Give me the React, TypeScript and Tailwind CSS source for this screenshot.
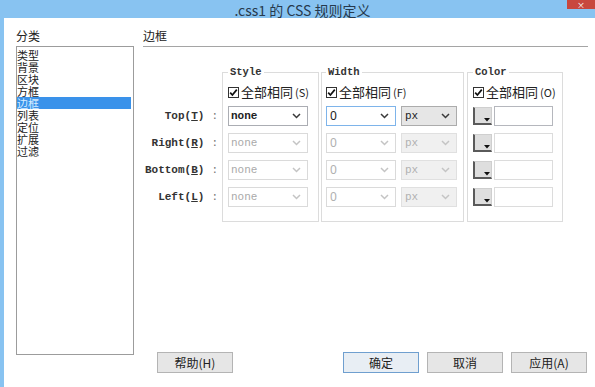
import React from "react";

const cjk = "font-['Noto_Sans_CJK_SC',sans-serif]";
const mono = "font-['Liberation_Mono','Noto_Sans_CJK_SC',monospace]";

const categories = ["类型", "背景", "区块", "方框", "边框", "列表", "定位", "扩展", "过滤"];

const Chevron = ({ light }: { light?: boolean }) => (
  <svg width="9" height="6" viewBox="0 0 9 6" className="shrink-0">
    <polyline points="1,1 4.5,4.5 8,1" fill="none" stroke={light ? "#c4c4c4" : "#3a3a3a"} strokeWidth="1.5" />
  </svg>
);

const Check = () => (
  <div className="w-[11px] h-[11px] border border-[#333] bg-white flex items-center justify-center shrink-0">
    <svg width="9" height="9" viewBox="0 0 9 9">
      <polyline points="1.2,4.6 3.4,7 7.8,1.6" fill="none" stroke="#111" strokeWidth="1.7" />
    </svg>
  </div>
);

const Swatch = () => (
  <div className="w-[19px] h-[18px] border-l-[2px] border-b-[2px] border-t border-r border-l-[#5a5a5a] border-b-[#5a5a5a] border-t-[#cfcfcf] border-r-[#cfcfcf] bg-[#dedede] flex items-end justify-end shrink-0">
    <svg width="6" height="4" viewBox="0 0 6 4" className="mb-[1px] mr-[1px]">
      <polygon points="0,0 6,0 3,3.5" fill="#111" />
    </svg>
  </div>
);

const CheckRow = ({ letter }: { letter: string }) => (
  <div className={`h-[18px] flex items-center gap-[2px] ${cjk}`}>
    <Check />
    <span className="text-[13px] leading-[18px] text-[#222]">全部相同</span>
    <span className="text-[11px] leading-[18px] text-[#222]">({letter})</span>
  </div>
);

const StyleSelect = ({ enabled }: { enabled: boolean }) => (
  <div
    className={
      enabled
        ? "w-[80px] h-[20px] border border-[#abadb3] bg-white flex items-center justify-between pl-[2px] pr-[6px]"
        : "w-[80px] h-[20px] border border-[#dadada] bg-white flex items-center justify-between pl-[2px] pr-[6px]"
    }
  >
    <span className={enabled ? `${mono} text-[11px] font-bold text-[#222]` : `${mono} text-[11px] text-[#aaa]`}>none</span>
    <Chevron light={!enabled} />
  </div>
);

const WidthSelects = ({ enabled }: { enabled: boolean }) => (
  <div className="flex gap-[5px]">
    <div
      className={
        enabled
          ? "w-[70px] h-[20px] border border-[#7eb4ea] bg-white flex items-center justify-between pl-[3px] pr-[6px]"
          : "w-[70px] h-[20px] border border-[#dadada] bg-white flex items-center justify-between pl-[3px] pr-[6px]"
      }
    >
      <span className={enabled ? "font-['Noto_Sans'] text-[12px] text-[#222]" : "font-['Noto_Sans'] text-[12px] text-[#b0b0b0]"}>0</span>
      <Chevron light={!enabled} />
    </div>
    <div
      className={
        enabled
          ? "w-[56px] h-[20px] border border-[#acacac] bg-[#e6e6e6] flex items-center justify-between pl-[3px] pr-[6px]"
          : "w-[56px] h-[20px] border border-[#e0e0e0] bg-[#f0f0f0] flex items-center justify-between pl-[3px] pr-[6px]"
      }
    >
      <span className={enabled ? `${mono} text-[11px] text-[#222]` : `${mono} text-[11px] text-[#b0b0b0]`}>px</span>
      <Chevron light={!enabled} />
    </div>
  </div>
);

const ColorRow = ({ enabled }: { enabled: boolean }) => (
  <div className="flex items-center gap-[2px] h-[20px]">
    <Swatch />
    <div className={enabled ? "w-[59px] h-[20px] border border-[#b5b7bd] bg-white" : "w-[59px] h-[20px] border border-[#dcdcdc] bg-white"} />
  </div>
);

const Legend = ({ text }: { text: string }) => (
  <legend className={`px-[2px] ${mono} text-[10.5px] leading-[12px] font-bold text-[#333]`}>{text}</legend>
);

const rows = [
  { name: "Top", key: "T" },
  { name: "Right", key: "R" },
  { name: "Bottom", key: "B" },
  { name: "Left", key: "L" },
];

const Btn = ({ children, primary }: { children: React.ReactNode; primary?: boolean }) => (
  <button
    className={
      primary
        ? `w-[76px] h-[21px] border border-[#6f9fcf] bg-[#e8eef4] ${cjk} text-[12px] leading-[19px] text-[#222]`
        : `w-[76px] h-[21px] border border-[#b4b4b4] bg-[#e6e6e6] ${cjk} text-[12px] leading-[19px] text-[#222]`
    }
  >
    {children}
  </button>
);

export default function App() {
  return (
    <div className={`w-[595px] h-[387px] bg-white flex flex-col overflow-hidden ${cjk} text-[#222]`}>
      {/* Title bar */}
      <div className="relative h-[18px] shrink-0 bg-[#88c3f1] flex justify-center pl-[10px]">
        <span className="mt-[2px] text-[14px] leading-[16px] text-[#26394d]">.css1 的 CSS 规则定义</span>
        <div className="absolute top-0 right-0 w-[28px] h-[9px] bg-[#c8473e] flex justify-center items-center overflow-hidden">
          <span className="text-white text-[8px] leading-[8px]">×</span>
        </div>
      </div>

      <div className="flex-1 flex border-l-[4px] border-[#88c3f1]">
        {/* Category list */}
        <div className="ml-[12px] w-[118px] pt-[10px] flex flex-col">
          <div className="h-[18px] text-[12px] leading-[16px]">分类</div>
          <div className="h-[309px] border border-[#9c9c9c] pt-[2px] pr-[2px]">
            {categories.map((c) =>
              c === "边框" ? (
                <div key={c} className="h-[12px] text-[11px] leading-[12px] bg-[#3a92ea] text-[#d8ecff]">
                  {c}
                </div>
              ) : (
                <div key={c} className="h-[12px] text-[11px] leading-[12px] text-[#222]">
                  {c}
                </div>
              )
            )}
          </div>
        </div>

        {/* Right panel */}
        <div className="ml-[9px] w-[445px] pt-[10px] flex flex-col">
          <div className="h-[19px] border-b border-[#a5a5a5] text-[12px] leading-[16px]">边框</div>

          <div className="mt-[19px] flex">
            <div className="w-[79px] pt-[40px] flex flex-col gap-[7px]">
              {rows.map((r) => (
                <div key={r.name} className={`h-[20px] flex items-center justify-end pr-[4px] ${mono} text-[11px] font-bold text-[#333]`}>
                  <span>
                    {r.name}(<span className="underline">{r.key}</span>)
                  </span>
                  <span className="ml-[7px] font-normal text-[#777]">:</span>
                </div>
              ))}
            </div>

            <fieldset className="w-[97px] border border-[#dcdcdc] pl-[5px] pb-[14px]">
              <Legend text="Style" />
              <div className="pt-[5px]">
                <CheckRow letter="S" />
              </div>
              <div className="mt-[5px] flex flex-col gap-[7px]">
                {rows.map((r, i) => (
                  <StyleSelect key={r.name} enabled={i === 0} />
                ))}
              </div>
            </fieldset>

            <fieldset className="ml-[2px] w-[143px] border border-[#dcdcdc] pl-[4px] pb-[14px]">
              <Legend text="Width" />
              <div className="pt-[5px]">
                <CheckRow letter="F" />
              </div>
              <div className="mt-[5px] flex flex-col gap-[7px]">
                {rows.map((r, i) => (
                  <WidthSelects key={r.name} enabled={i === 0} />
                ))}
              </div>
            </fieldset>

            <fieldset className="ml-[3px] w-[96px] border border-[#dcdcdc] pl-[5px] pb-[14px]">
              <Legend text="Color" />
              <div className="pt-[5px]">
                <CheckRow letter="O" />
              </div>
              <div className="mt-[5px] flex flex-col gap-[7px]">
                {rows.map((r, i) => (
                  <ColorRow key={r.name} enabled={i === 0} />
                ))}
              </div>
            </fieldset>
          </div>

          <div className="flex-1" />

          <div className="flex items-center justify-between pl-[14px] pr-[1px] pb-[14px]">
            <Btn>帮助(H)</Btn>
            <div className="flex gap-[8px]">
              <Btn primary>确定</Btn>
              <Btn>取消</Btn>
              <Btn>应用(A)</Btn>
            </div>
          </div>
        </div>
      </div>
    </div>
  );
}
